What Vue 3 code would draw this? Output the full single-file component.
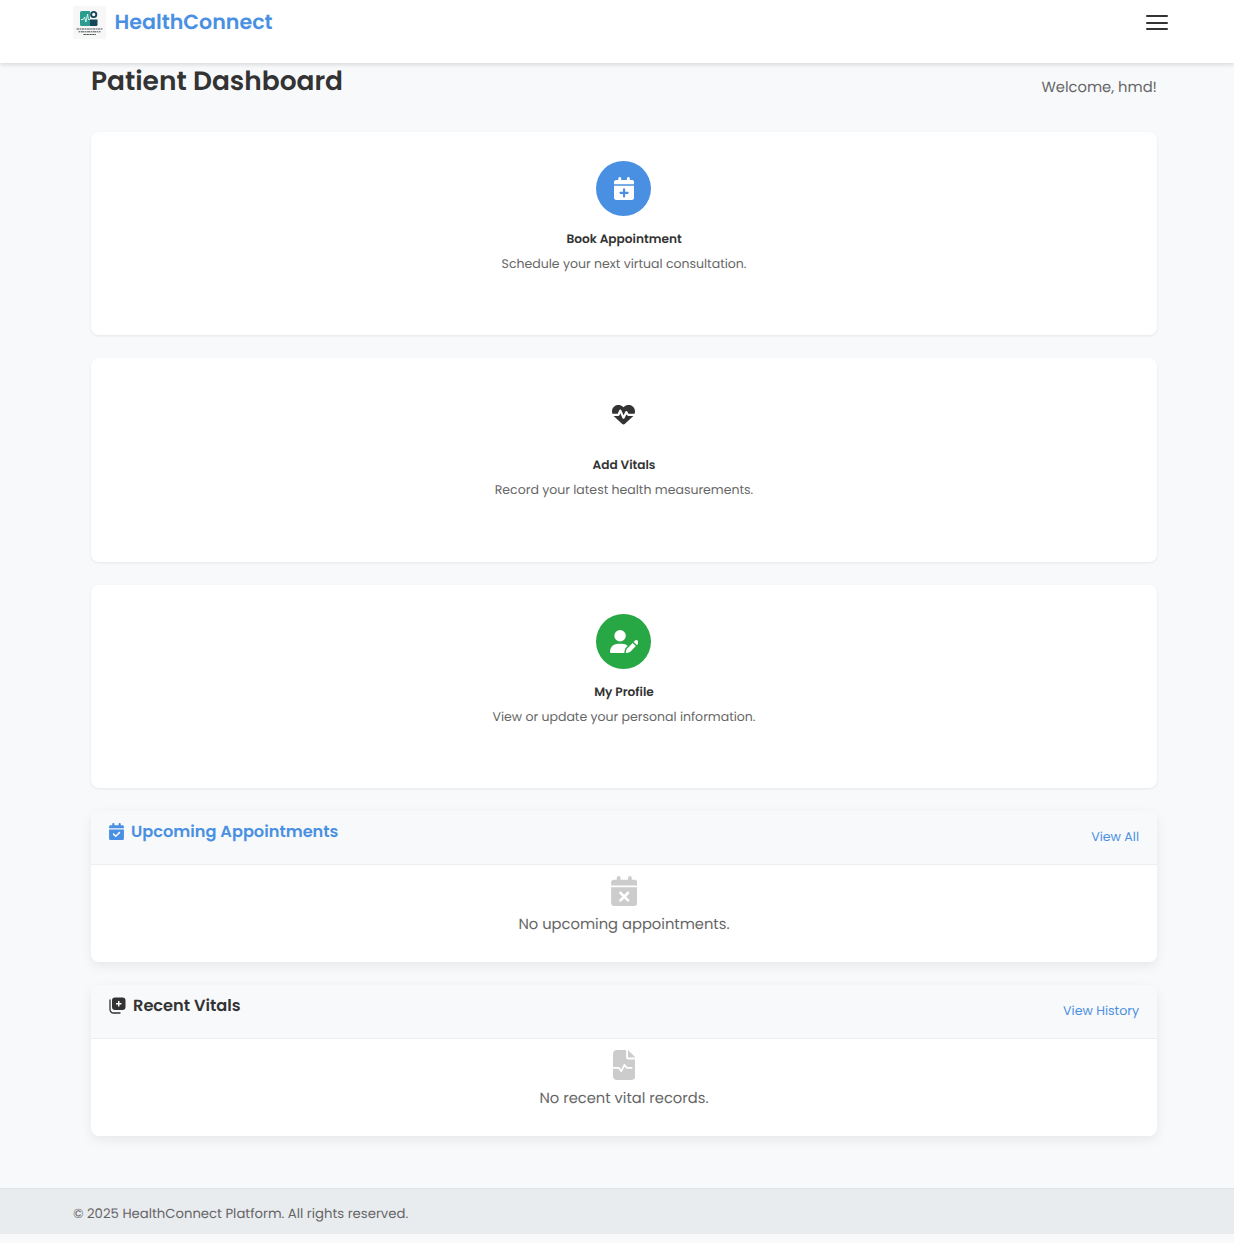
<script setup>
const calendar =
  'M96 32l0 32L48 64C21.5 64 0 85.5 0 112l0 48 448 0 0-48c0-26.5-21.5-48-48-48l-48 0 0-32c0-17.7-14.3-32-32-32s-32 14.3-32 32l0 32L160 64l0-32c0-17.7-14.3-32-32-32S96 14.3 96 32zM448 192L0 192 0 464c0 26.5 21.5 48 48 48l352 0c26.5 0 48-21.5 48-48l0-272z'
const calendarPlus =
  calendar +
  'M224 248c13.3 0 24 10.7 24 24l0 56 56 0c13.3 0 24 10.7 24 24s-10.7 24-24 24l-56 0 0 56c0 13.3-10.7 24-24 24s-24-10.7-24-24l0-56-56 0c-13.3 0-24-10.7-24-24s10.7-24 24-24l56 0 0-56c0-13.3 10.7-24 24-24z'
const calendarCheck =
  calendar +
  'M329 305c9.4-9.4 9.4-24.6 0-33.9s-24.6-9.4-33.9 0l-95 95-47-47c-9.4-9.4-24.6-9.4-33.9 0s-9.4 24.6 0 33.9l64 64c9.4 9.4 24.6 9.4 33.9 0L329 305z'
const calendarXmark =
  calendar +
  'M305 305l-47 47 47 47c9.4 9.4 9.4 24.6 0 33.9s-24.6 9.4-33.9 0l-47-47-47 47c-9.4 9.4-24.6 9.4-33.9 0s-9.4-24.6 0-33.9l47-47-47-47c-9.4-9.4-9.4-24.6 0-33.9s24.6-9.4 33.9 0l47 47 47-47c9.4-9.4 24.6-9.4 33.9 0s9.4 24.6 0 33.9z'
const heartPulse =
  'M228.3 469.1L47.6 300.4c-4.2-3.9-8.2-8.1-11.9-12.4l87 0c22.6 0 43-13.6 51.7-34.5l10.5-25.2 49.3 109.5c3.8 8.5 12.1 14 21.4 14.1s17.8-5 22-13.3L320 253.7l1.7 3.4c9.5 19 28.9 31 50.1 31l104.5 0c-3.7 4.3-7.7 8.5-11.9 12.4L283.7 469.1c-7.5 7-17.4 10.9-27.7 10.9s-20.2-3.9-27.7-10.9zM503.7 240l-132 0c-3 0-5.8-1.7-7.2-4.4l-23.2-46.3c-4.1-8.1-12.4-13.3-21.5-13.3s-17.4 5.1-21.5 13.3l-41.4 82.8L205.9 158.2c-3.9-8.7-12.7-14.3-22.2-14.1s-18.1 5.9-21.8 14.8l-31.8 76.3c-1.2 3-4.2 4.9-7.4 4.9L16 240c-2.6 0-5 .4-7.3 1.1C3 225.2 0 208.2 0 190.9l0-5.8c0-69.9 50.5-129.5 119.4-141C165 36.5 211.4 51.4 244 84l12 12 12-12c32.6-32.6 79-47.5 124.6-39.9C461.5 55.6 512 115.2 512 185.1l0 5.8c0 16.9-2.8 33.5-8.3 49.1z'
const userPen =
  'M224 256A128 128 0 1 0 224 0a128 128 0 1 0 0 256zm-45.7 48C79.8 304 0 383.8 0 482.3C0 498.7 13.3 512 29.7 512l293.1 0c-3.1-8.8-3.7-18.4-1.4-27.8l15-60.1c2.8-11.3 8.6-21.5 16.8-29.7l40.3-40.3c-32.1-31-75.7-50.1-123.9-50.1l-91.4 0zm435.5-68.3c-15.6-15.6-40.9-15.6-56.6 0l-29.4 29.4 71 71 29.4-29.4c15.6-15.6 15.6-40.9 0-56.6l-14.4-14.4zM375.9 417c-4.1 4.1-7 9.2-8.4 14.9l-15 60.1c-1.4 5.5 .2 11.2 4.2 15.2s9.7 5.6 15.2 4.2l60.1-15c5.6-1.4 10.8-4.3 14.9-8.4L576.1 358.7l-71-71L375.9 417z'

const actions = [
  { id: 'book', title: 'Book Appointment', text: 'Schedule your next virtual consultation.', path: calendarPlus, w: 448 },
  { id: 'vitals', title: 'Add Vitals', text: 'Record your latest health measurements.', path: heartPulse, w: 512 },
  { id: 'profile', title: 'My Profile', text: 'View or update your personal information.', path: userPen, w: 640 },
]
</script>

<template>
  <div class="page">
    <header class="navbar">
      <a class="brand">
        <svg class="logo" viewBox="0 0 33 33">
          <rect width="33" height="33" fill="#f7f7f7" />
          <path d="M8.500 5H17v15H8.500A1.500 1.500 0 0 1 7 18.500v-12A1.500 1.500 0 0 1 8.500 5z" fill="#2a9d8f" />
          <path d="M17 13.500h7.500v5a1.500 1.500 0 0 1-1.500 1.500h-6z" fill="#16465a" />
          <circle cx="20.700" cy="8.500" r="2.600" fill="#f7f7f7" stroke="#16465a" stroke-width="1.900" />
          <path d="M8 13.500h2.300l1.300-2.500 1.300 5 1.700-8 .8 5.500H17" fill="none" stroke="#e6f6f3" stroke-width="0.900" />
          <g stroke="#4c5357" stroke-width="1">
            <path d="M3.500 23h26" stroke-dasharray="2.600 .5 1.700 .5" />
            <path d="M5.500 25.800h22" stroke-dasharray="2 .5 3 .5" />
            <path d="M10.500 28.500h12.500" stroke-dasharray="2.400 .5" />
          </g>
        </svg>
        <span class="brand-name">HealthConnect</span>
      </a>
      <button class="menu" aria-label="Menu"><i></i><i></i><i></i></button>
    </header>

    <main class="content">
      <div class="heading">
        <h1>Patient Dashboard</h1>
        <p>Welcome, hmd!</p>
      </div>

      <section class="actions">
        <article v-for="a in actions" :key="a.id" class="action" :class="a.id">
          <div class="bubble">
            <svg :viewBox="`0 0 ${a.w} 512`" height="23"><path :d="a.path" fill="currentColor" fill-rule="evenodd" /></svg>
          </div>
          <h2>{{ a.title }}</h2>
          <p>{{ a.text }}</p>
        </article>
      </section>

      <section class="panel upcoming">
        <header>
          <h3>
            <svg viewBox="0 0 448 512" width="15" height="17"><path :d="calendarCheck" fill="currentColor" fill-rule="evenodd" /></svg>
            <span>Upcoming Appointments</span>
          </h3>
          <a>View All</a>
        </header>
        <div class="empty">
          <svg viewBox="0 0 448 512" width="26.500" height="30"><path :d="calendarXmark" fill="currentColor" fill-rule="evenodd" /></svg>
          <p>No upcoming appointments.</p>
        </div>
      </section>

      <section class="panel recent">
        <header>
          <h3>
            <svg viewBox="0 0 17 17" width="17" height="17">
              <path d="M1 3v9.500A3.500 3.500 0 0 0 4.500 16H11" fill="none" stroke="currentColor" stroke-width="1.300" stroke-linecap="round" />
              <path d="M6 .5h7.500a3 3 0 0 1 3 3V10a3 3 0 0 1-3 3H6a3 3 0 0 1-3-3V3.500a3 3 0 0 1 3-3zM9 4v2H7v1.500h2v2h1.500v-2h2V6h-2V4z" fill="currentColor" fill-rule="evenodd" />
            </svg>
            <span>Recent Vitals</span>
          </h3>
          <a>View History</a>
        </header>
        <div class="empty">
          <svg viewBox="0 0 384 512" width="22.500" height="30">
            <path d="M64 0h160v128c0 17.700 14.300 32 32 32h128v288c0 35.300-28.700 64-64 64H64c-35.300 0-64-28.700-64-64V64C0 28.700 28.700 0 64 0z" fill="currentColor" />
            <path d="M256 0l128 128H256z" fill="currentColor" />
            <path d="M0 304h104l36 62 56-116 40 54h84" fill="none" stroke="#fff" stroke-width="28" stroke-linecap="round" stroke-linejoin="round" />
          </svg>
          <p>No recent vital records.</p>
        </div>
      </section>
    </main>

    <footer class="footer"><p>© 2025 HealthConnect Platform. All rights reserved.</p></footer>
  </div>
</template>

<style>
body {
  margin: 0;
  background: #f8f9fb;
}
</style>

<style scoped>
.page {
  height: 1243px;
  overflow: hidden;
  display: flex;
  flex-direction: column;
  font-family: Poppins, Inter, "Open Sans", sans-serif;
  text-rendering: geometricPrecision;
  color: #333;
  background: #f8f9fb;
}
h1, h2, h3, p {
  margin: 0;
  white-space: nowrap;
}
svg {
  display: block;
  flex: none;
}
.navbar {
  flex: none;
  box-sizing: border-box;
  height: 63px;
  padding: 6px 66px 0 73px;
  display: flex;
  justify-content: space-between;
  align-items: flex-start;
  background: #fff;
  box-shadow: 0 2px 4px rgba(0, 0, 0, 0.12);
}
.brand {
  display: flex;
  gap: 8.500px;
  color: #4a90e2;
}
.logo {
  width: 33px;
  height: 33px;
}
.brand-name {
  font-size: 20.600px;
  line-height: 33px;
  font-weight: 600;
  white-space: nowrap;
}
.menu {
  width: 22px;
  padding: 0;
  margin: 9px 0 0;
  border: 0;
  background: none;
  display: flex;
  flex-direction: column;
  gap: 4.500px;
}
.menu i {
  height: 2px;
  border-radius: 1px;
  background: #333;
}
.content {
  flex: none;
  width: 1066px;
  margin-left: 91px;
}
.heading {
  height: 68.600px;
  display: flex;
  justify-content: space-between;
}
.heading h1 {
  padding-top: 1px;
  font-size: 26.450px;
  line-height: 36px;
  font-weight: 600;
}
.heading p {
  padding-top: 13px;
  font-size: 14.730px;
  line-height: 24px;
  color: #666;
}
.actions {
  display: flex;
  flex-direction: column;
  gap: 22.600px;
}
.action {
  box-sizing: border-box;
  height: 203.900px;
  padding-top: 29.500px;
  display: flex;
  flex-direction: column;
  align-items: center;
  background: #fff;
  border-radius: 8px;
  box-shadow: 0 1px 3px rgba(0, 0, 0, 0.08);
}
.bubble {
  width: 55px;
  height: 55px;
  border-radius: 50%;
  display: grid;
  place-items: center;
  margin-right: 0.600px;
}
.bubble svg {
  margin-left: 0.800px;
}
.vitals .bubble svg {
  margin-left: 0;
}
.book .bubble {
  color: #fff;
  background: #4a90e2;
}
.profile .bubble {
  color: #fff;
  background: #28a745;
}
.vitals {
  padding-top: 29px;
}
.action h2 {
  margin-top: 13.500px;
  font-size: 12.150px;
  line-height: 20px;
  font-weight: 600;
}
.vitals h2 {
  margin-top: 14px;
}
.action p {
  margin-top: 5.200px;
  font-size: 12.520px;
  line-height: 20px;
  color: #666;
}
.panel {
  margin-top: 22.200px;
  height: 151.800px;
  border-radius: 8px;
  overflow: hidden;
  background: #fff;
  box-shadow: 0 4px 12px rgba(0, 0, 0, 0.07);
}
.panel header {
  box-sizing: border-box;
  height: 54px;
  padding: 7.700px 18px 0;
  display: flex;
  justify-content: space-between;
  background: #f8f9fb;
  border-bottom: 1px solid #eceef0;
}
.panel h3 {
  height: 26px;
  display: flex;
  align-items: center;
  gap: 7px;
  font-size: 16.200px;
  font-weight: 600;
}
.upcoming h3,
.panel a {
  color: #4a90e2;
}
.panel a {
  padding-top: 10px;
  font-size: 12.600px;
  line-height: 20px;
}
.empty {
  padding-top: 11.500px;
  display: flex;
  flex-direction: column;
  align-items: center;
  color: #ccc;
}
.empty p {
  margin-top: 7px;
  font-size: 14.730px;
  line-height: 24px;
  color: #666;
}
.footer {
  flex: none;
  box-sizing: border-box;
  height: 46px;
  margin-top: 51.500px;
  padding: 14.900px 73px 0;
  border-top: 1px solid #dee2e6;
  background: #e9ecef;
}
.footer p {
  font-size: 13.240px;
  line-height: 20px;
  color: #666;
}
</style>
